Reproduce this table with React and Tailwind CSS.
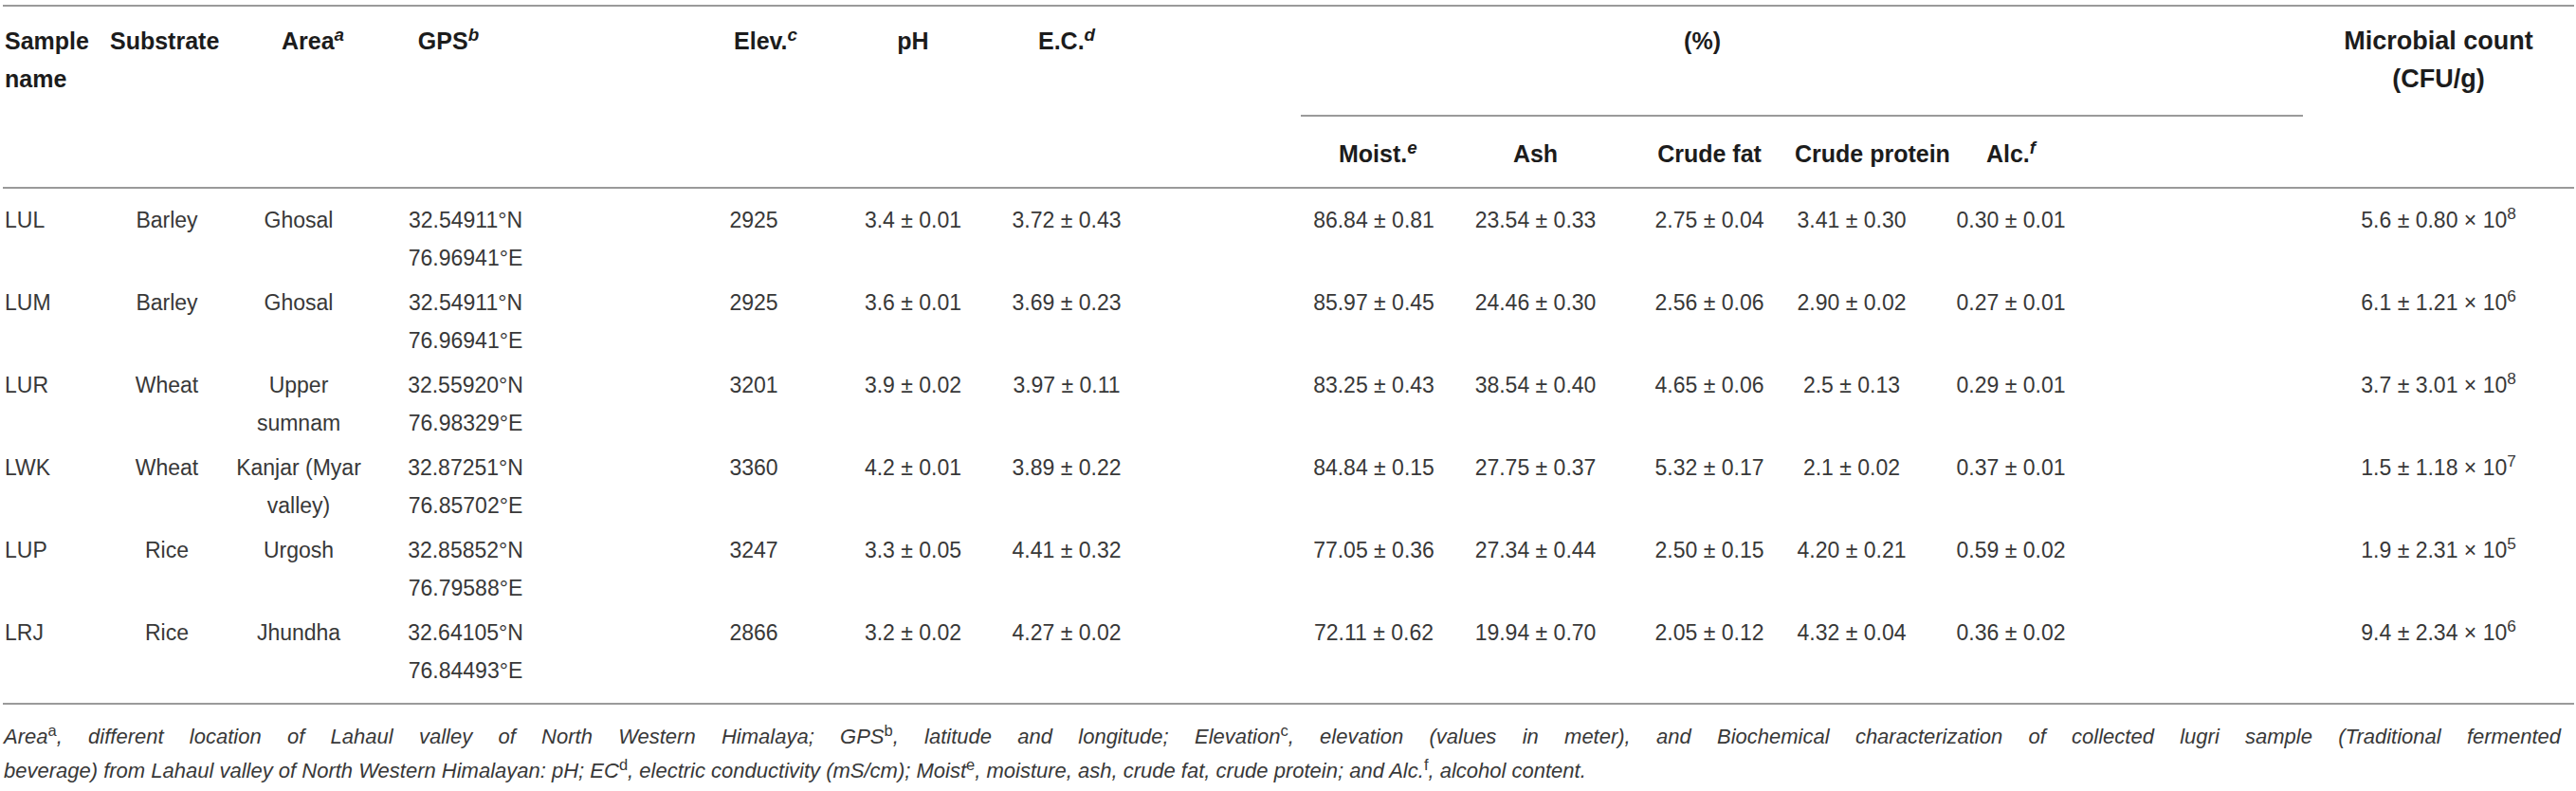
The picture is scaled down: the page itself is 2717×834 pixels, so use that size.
const rows = [
  ["LUL", "Barley", ["Ghosal"], ["32.54911°N", "76.96941°E"], "2925", "3.4 ± 0.01", "3.72 ± 0.43", "86.84 ± 0.81", "23.54 ± 0.33", "2.75 ± 0.04", "3.41 ± 0.30", "0.30 ± 0.01", ["5.6 ± 0.80", "8"]],
  ["LUM", "Barley", ["Ghosal"], ["32.54911°N", "76.96941°E"], "2925", "3.6 ± 0.01", "3.69 ± 0.23", "85.97 ± 0.45", "24.46 ± 0.30", "2.56 ± 0.06", "2.90 ± 0.02", "0.27 ± 0.01", ["6.1 ± 1.21", "6"]],
  ["LUR", "Wheat", ["Upper", "sumnam"], ["32.55920°N", "76.98329°E"], "3201", "3.9 ± 0.02", "3.97 ± 0.11", "83.25 ± 0.43", "38.54 ± 0.40", "4.65 ± 0.06", "2.5 ± 0.13", "0.29 ± 0.01", ["3.7 ± 3.01", "8"]],
  ["LWK", "Wheat", ["Kanjar (Myar", "valley)"], ["32.87251°N", "76.85702°E"], "3360", "4.2 ± 0.01", "3.89 ± 0.22", "84.84 ± 0.15", "27.75 ± 0.37", "5.32 ± 0.17", "2.1 ± 0.02", "0.37 ± 0.01", ["1.5 ± 1.18", "7"]],
  ["LUP", "Rice", ["Urgosh"], ["32.85852°N", "76.79588°E"], "3247", "3.3 ± 0.05", "4.41 ± 0.32", "77.05 ± 0.36", "27.34 ± 0.44", "2.50 ± 0.15", "4.20 ± 0.21", "0.59 ± 0.02", ["1.9 ± 2.31", "5"]],
  ["LRJ", "Rice", ["Jhundha"], ["32.64105°N", "76.84493°E"], "2866", "3.2 ± 0.02", "4.27 ± 0.02", "72.11 ± 0.62", "19.94 ± 0.70", "2.05 ± 0.12", "4.32 ± 0.04", "0.36 ± 0.02", ["9.4 ± 2.34", "6"]],
];

const Lines = ({ items }) =>
  items.map((t, i) => (
    <span key={i} className="block">
      {t}
    </span>
  ));

export default function App() {
  return (
    <div className="bg-white w-[2717px] h-[834px] font-['Liberation_Sans',Arial,sans-serif]">
      <table className="table-fixed border-collapse w-[2712px] ml-[3px] mt-[5px]">
        <colgroup>
          <col className="w-[100px]" />
          <col className="w-[146px]" />
          <col className="w-[132px]" />
          <col className="w-[334px]" />
          <col className="w-[160px]" />
          <col className="w-[176px]" />
          <col className="w-[321px]" />
          <col className="w-[154px]" />
          <col className="w-[187px]" />
          <col className="w-[180px]" />
          <col className="w-[120px]" />
          <col className="w-[416px]" />
          <col className="w-[286px]" />
        </colgroup>

        {/* header */}
        <thead className="text-[25px] leading-[40px] font-bold text-[#1c1c1c]">
          <tr className="border-t-2 border-[#9a9a9a]">
            <th rowSpan={2} className="align-top text-left pl-[2px] pt-[16px] border-b-2 border-[#9a9a9a]">
              Sample
              <br />
              name
            </th>
            <th rowSpan={2} className="align-top text-left pl-[13px] pt-[16px] border-b-2 border-[#9a9a9a]">
              Substrate
            </th>
            <th rowSpan={2} className="align-top text-center pl-[30px] pt-[16px] border-b-2 border-[#9a9a9a]">
              Area<sup className="italic">a</sup>
            </th>
            <th rowSpan={2} className="align-top text-center pr-[150px] pt-[16px] border-b-2 border-[#9a9a9a]">
              GPS<sup className="italic">b</sup>
            </th>
            <th rowSpan={2} className="align-top text-center pl-[25px] pt-[16px] border-b-2 border-[#9a9a9a]">
              Elev.<sup className="italic">c</sup>
            </th>
            <th rowSpan={2} className="align-top text-center pt-[16px] border-b-2 border-[#9a9a9a]">
              pH
            </th>
            <th rowSpan={2} className="align-top text-center pr-[173px] pt-[16px] border-b-2 border-[#9a9a9a]">
              E.C.<sup className="italic">d</sup>
            </th>
            <th colSpan={5} className="align-top text-center pr-[210px] pt-[16px] h-[116px] border-b-2 border-[#9a9a9a]">
              (%)
            </th>
            <th rowSpan={2} className="align-top text-center text-[27px] pt-[16px] border-b-2 border-[#9a9a9a]">
              Microbial count
              <br />
              (CFU/g)
            </th>
          </tr>
          <tr className="border-b-2 border-[#9a9a9a]">
            <th className="text-left pl-[40px] pt-[19px] pb-[15px]">
              Moist.<sup className="italic">e</sup>
            </th>
            <th className="text-center pt-[19px] pb-[15px]">Ash</th>
            <th className="text-center pt-[19px] pb-[15px] whitespace-nowrap">Crude fat</th>
            <th className="text-center pt-[19px] pb-[15px] whitespace-nowrap">Crude protein</th>
            <th className="text-center pr-[200px] pt-[19px] pb-[15px]">
              Alc.<sup className="italic">f</sup>
            </th>
          </tr>
        </thead>

        {/* body */}
        <tbody className="text-[23px] leading-[40px] text-[#383838] border-b-2 border-[#9a9a9a]">
          {rows.map((r, i) => {
            const pad = `${i === 0 ? "pt-[13px]" : "pt-[3px]"} ${i === rows.length - 1 ? "pb-[14px]" : "pb-[4px]"}`;
            return (
              <tr key={r[0]}>
                <td className={`align-top text-left pl-[2px] ${pad}`}>{r[0]}</td>
                <td className={`align-top text-center ${pad}`}>{r[1]}</td>
                <td className={`align-top text-center ${pad}`}>
                  <Lines items={r[2]} />
                </td>
                <td className={`align-top text-center pr-[114px] ${pad}`}>
                  <Lines items={r[3]} />
                </td>
                <td className={`align-top text-center ${pad}`}>{r[4]}</td>
                <td className={`align-top text-center ${pad}`}>{r[5]}</td>
                <td className={`align-top text-center pr-[173px] ${pad}`}>{r[6]}</td>
                <td className={`align-top text-center ${pad}`}>{r[7]}</td>
                <td className={`align-top text-center ${pad}`}>{r[8]}</td>
                <td className={`align-top text-center ${pad}`}>{r[9]}</td>
                <td className={`align-top text-center whitespace-nowrap ${pad}`}>{r[10]}</td>
                <td className={`align-top text-center pr-[200px] ${pad}`}>{r[11]}</td>
                <td className={`align-top text-center whitespace-nowrap ${pad}`}>
                  {r[12][0]} × 10<sup>{r[12][1]}</sup>
                </td>
              </tr>
            );
          })}
        </tbody>
      </table>

      {/* footnote: first line justified to full width, last line left */}
      <div className="ml-[4px] mt-[16px] w-[2697px] text-[22px] leading-[36px] italic text-[#383838]">
        <p className="text-justify [text-align-last:justify] whitespace-nowrap">
          Area<sup className="not-italic">a</sup>, different location of Lahaul valley of North Western Himalaya; GPS
          <sup className="not-italic">b</sup>, latitude and longitude; Elevation<sup className="not-italic">c</sup>,
          elevation (values in meter), and Biochemical characterization of collected lugri sample (Traditional fermented
        </p>
        <p>
          beverage) from Lahaul valley of North Western Himalayan: pH; EC<sup className="not-italic">d</sup>, electric
          conductivity (mS/cm); Moist<sup className="not-italic">e</sup>, moisture, ash, crude fat, crude protein; and
          Alc.<sup className="not-italic">f</sup>, alcohol content.
        </p>
      </div>
    </div>
  );
}
